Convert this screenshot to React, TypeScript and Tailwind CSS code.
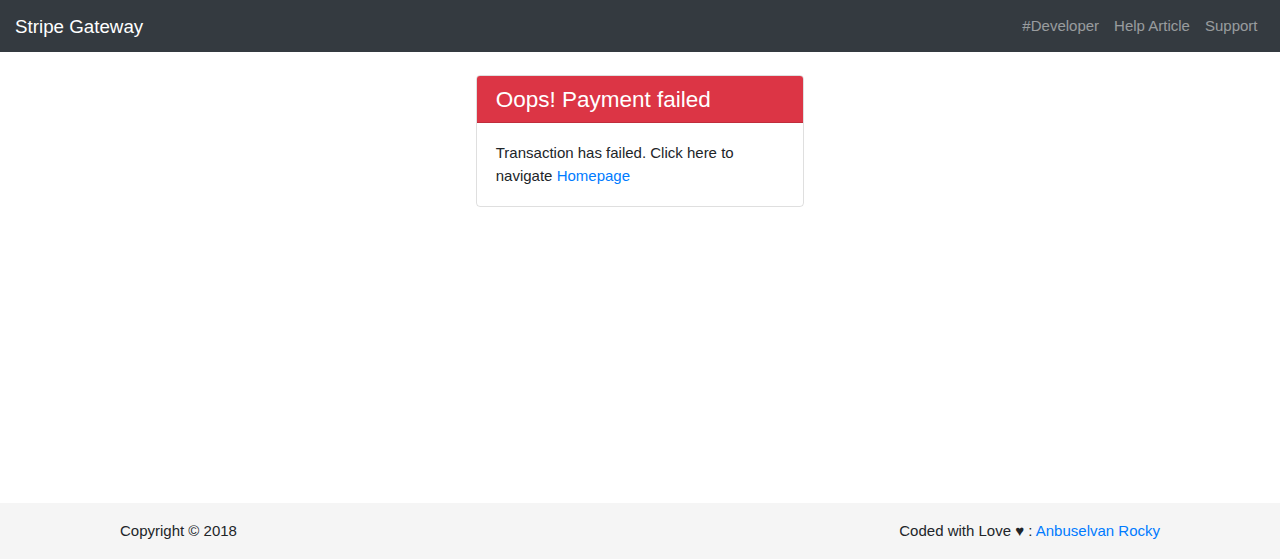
export default function App() {
  return (
    <div className="flex h-[559px] flex-col bg-white text-[15px] leading-[22.5px] text-[#212529] [font-family:'Liberation_Sans',Arial,sans-serif]">
      <nav className="flex h-[52px] items-center justify-between bg-[#343a40] px-[15px]">
        <a className="pt-px text-[18.75px] leading-[28px] text-white">Stripe Gateway</a>
        <div className="flex text-[rgba(255,255,255,0.5)]">
          <a className="px-[7.5px] py-[7.5px]">#Developer</a>
          <a className="px-[7.5px] py-[7.5px]">Help Article</a>
          <a className="px-[7.5px] py-[7.5px]">Support</a>
        </div>
      </nav>
      <main className="flex flex-1 justify-center pt-[23px]">
        <div className="h-[132px] w-[328px] overflow-hidden rounded-[4px] border border-[rgba(0,0,0,0.125)]">
          <div className="border-b border-[rgba(0,0,0,0.125)] bg-[#dc3545] px-[18.75px] pt-[9.75px] pb-[9.5px] text-[22.5px] leading-[27px] text-white">
            Oops! Payment failed
          </div>
          <div className="p-[18.75px]">
            Transaction has failed. Click here to navigate <a className="text-[#007bff]">Homepage</a>
          </div>
        </div>
      </main>
      <footer className="flex h-[56px] items-center justify-between bg-[#f5f5f5] px-[120px]">
        <span>Copyright © 2018</span>
        <span>
          Coded with Love ♥ : <a className="text-[#007bff]">Anbuselvan Rocky</a>
        </span>
      </footer>
    </div>
  );
}
